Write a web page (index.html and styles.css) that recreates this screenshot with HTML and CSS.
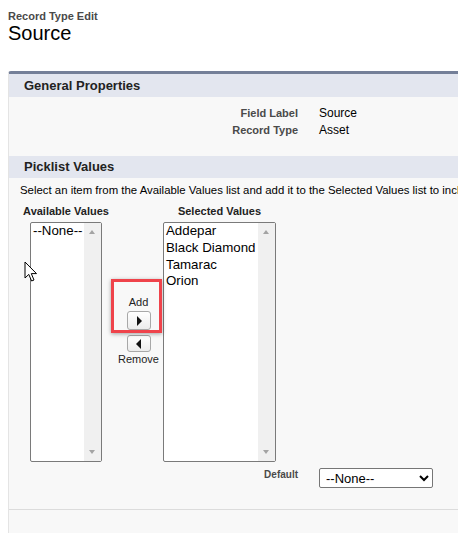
FILE: index.html
```html
<!DOCTYPE html>
<html>
<head>
<meta charset="utf-8">
<link rel="stylesheet" href="styles.css">
</head>
<body>
<div class="page">
  <div class="head">
    <div class="head-sub">Record Type Edit</div>
    <div class="head-title">Source</div>
  </div>
  <div class="panel">
    <div class="sec-head">General Properties</div>
    <div class="props">
      <div class="prow"><span class="plabel">Field Label</span><span class="pval">Source</span></div>
      <div class="prow"><span class="plabel">Record Type</span><span class="pval">Asset</span></div>
    </div>
    <div class="sec-head sec-head2">Picklist Values</div>
    <div class="pick">
      <div class="desc">Select an item from the Available Values list and add it to the Selected Values list to include it in the picklist for this record type.</div>
      <div class="dual">
        <div class="colhead">Available Values</div>
        <div></div>
        <div class="colhead">Selected Values</div>
        <div class="listbox lb-avail">
          <div class="items"><div>--None--</div></div>
          <div class="sbar"><span class="up"></span><span class="down"></span></div>
        </div>
        <div class="mid">
          <div class="mlabel">Add</div>
          <div class="btn"><span class="tri-r"></span></div>
          <div class="btn btn2"><span class="tri-l"></span></div>
          <div class="mlabel">Remove</div>
          <div class="hl"></div>
        </div>
        <div class="listbox lb-sel">
          <div class="items"><div>Addepar</div><div>Black Diamond</div><div>Tamarac</div><div>Orion</div></div>
          <div class="sbar"><span class="up"></span><span class="down"></span></div>
        </div>
      </div>
      <div class="defrow">
        <span class="plabel dlabel">Default</span>
        <select class="defsel"><option>--None--</option></select>
      </div>
    </div>
    <div class="foot"></div>
  </div>
</div>
<svg class="cursor" width="14" height="22" viewBox="0 0 14 22"><path d="M1 1 L1 17 L4.8 13.4 L7.6 20 L10 19 L7.3 12.6 L12.5 12.6 Z" fill="#fff" stroke="#000" stroke-width="1" stroke-linejoin="miter"/></svg>
</body>
</html>
```
FILE: styles.css
```css
html, body {
  margin: 0;
  padding: 0;
  background: #fff;
  overflow: hidden;
}
body {
  font-family: "Liberation Sans", Arial, sans-serif;
  color: #000;
  position: relative;
  width: 458px;
  height: 533px;
}
.page {
  padding-left: 8px;
}
.head {
  padding-top: 10px;
  box-sizing: border-box;
  height: 71px;
}
.head-sub {
  font-size: 11px;
  font-weight: bold;
  color: #4a4a4a;
  line-height: 12px;
}
.head-title {
  font-size: 20px;
  color: #000;
  line-height: 22px;
}
.panel {
  width: 470px;
  background: #f8f8f8;
  border-top: 3px solid #747f98;
  border-left: 1px solid #e4e4e4;
  border-top-left-radius: 3px;
}
.sec-head {
  height: 23px;
  line-height: 23px;
  background: #e3e6ef;
  padding-left: 15px;
  font-size: 13px;
  font-weight: bold;
  color: #222;
}
.sec-head2 {
  height: 22px;
  line-height: 22px;
}
.props {
  height: 59px;
  padding-top: 7px;
  box-sizing: border-box;
}
.prow {
  display: flex;
  align-items: center;
  height: 17px;
  font-size: 11px;
}
.plabel {
  width: 289px;
  text-align: right;
  font-weight: bold;
  color: #4a4a4a;
  font-size: 11px;
}
.pval {
  margin-left: 21px;
  color: #000;
  font-size: 12px;
}
.pick {
  padding-top: 6px;
  height: 331px;
  box-sizing: border-box;
}
.desc {
  font-size: 11.4px;
  color: #000;
  white-space: nowrap;
  padding-left: 11px;
  line-height: 13px;
}
.dual {
  display: grid;
  grid-template-columns: 72px 61px 113px;
  grid-template-rows: 18px 240px;
  padding-left: 21px;
  margin-top: 7px;
}
.colhead {
  display: flex;
  justify-content: center;
  font-size: 11px;
  font-weight: bold;
  color: #222;
  line-height: 14px;
  white-space: nowrap;
}
.listbox {
  border: 1px solid #7a7a7a;
  border-radius: 2px;
  background: #fff;
  display: flex;
  box-sizing: border-box;
}
.items {
  flex: 1;
  font-size: 13.3px;
  line-height: 16.8px;
  padding-left: 2px;
  white-space: nowrap;
  overflow: hidden;
}
.sbar {
  width: 17px;
  background: #f0f0f0;
  position: relative;
}
.up, .down {
  position: absolute;
  left: 5px;
  width: 0;
  height: 0;
  border-left: 3.5px solid transparent;
  border-right: 3.5px solid transparent;
}
.up {
  top: 7px;
  border-bottom: 4px solid #a3a3a3;
}
.down {
  bottom: 7px;
  border-top: 4px solid #a3a3a3;
}
.mid {
  position: relative;
  display: flex;
  flex-direction: column;
  align-items: center;
  padding-top: 74px;
  padding-left: 12px;
}
.mlabel {
  font-size: 11px;
  color: #222;
  line-height: 13px;
}
.btn {
  margin-top: 2px;
  width: 24px;
  height: 19px;
  box-sizing: border-box;
  border: 1px solid #a8a8a8;
  border-radius: 3px;
  background: linear-gradient(#fff, #ececec);
  display: flex;
  align-items: center;
  justify-content: center;
}
.btn2 {
  margin-top: 5px;
  margin-bottom: 1px;
  height: 17px;
}
.tri-r {
  width: 0;
  height: 0;
  border-top: 5px solid transparent;
  border-bottom: 5px solid transparent;
  border-left: 5px solid #111;
  margin-left: 1px;
}
.tri-l {
  width: 0;
  height: 0;
  border-top: 5px solid transparent;
  border-bottom: 5px solid transparent;
  border-right: 5px solid #111;
  margin-right: 1px;
}
.hl {
  position: absolute;
  left: 9px;
  top: 57px;
  width: 51px;
  height: 54px;
  box-sizing: border-box;
  border: 3px solid #ef434b;
  box-shadow: 0 1px 4px rgba(0, 0, 0, 0.35);
}
.defrow {
  display: flex;
  align-items: center;
  margin-top: 6px;
}
.dlabel {
  font-size: 10px;
  align-self: flex-start;
  margin-top: 1px;
}
.defsel {
  margin-left: 21px;
  width: 114px;
  height: 20px;
  font-family: "Liberation Sans", Arial, sans-serif;
  font-size: 13px;
  border: 1px solid #767676;
  border-radius: 2px;
  background: #fff;
  color: #000;
  padding: 0 2px;
}
.foot {
  border-top: 1px solid #dcdcdc;
  height: 30px;
}
.cursor {
  position: absolute;
  left: 24px;
  top: 261px;
}
```
